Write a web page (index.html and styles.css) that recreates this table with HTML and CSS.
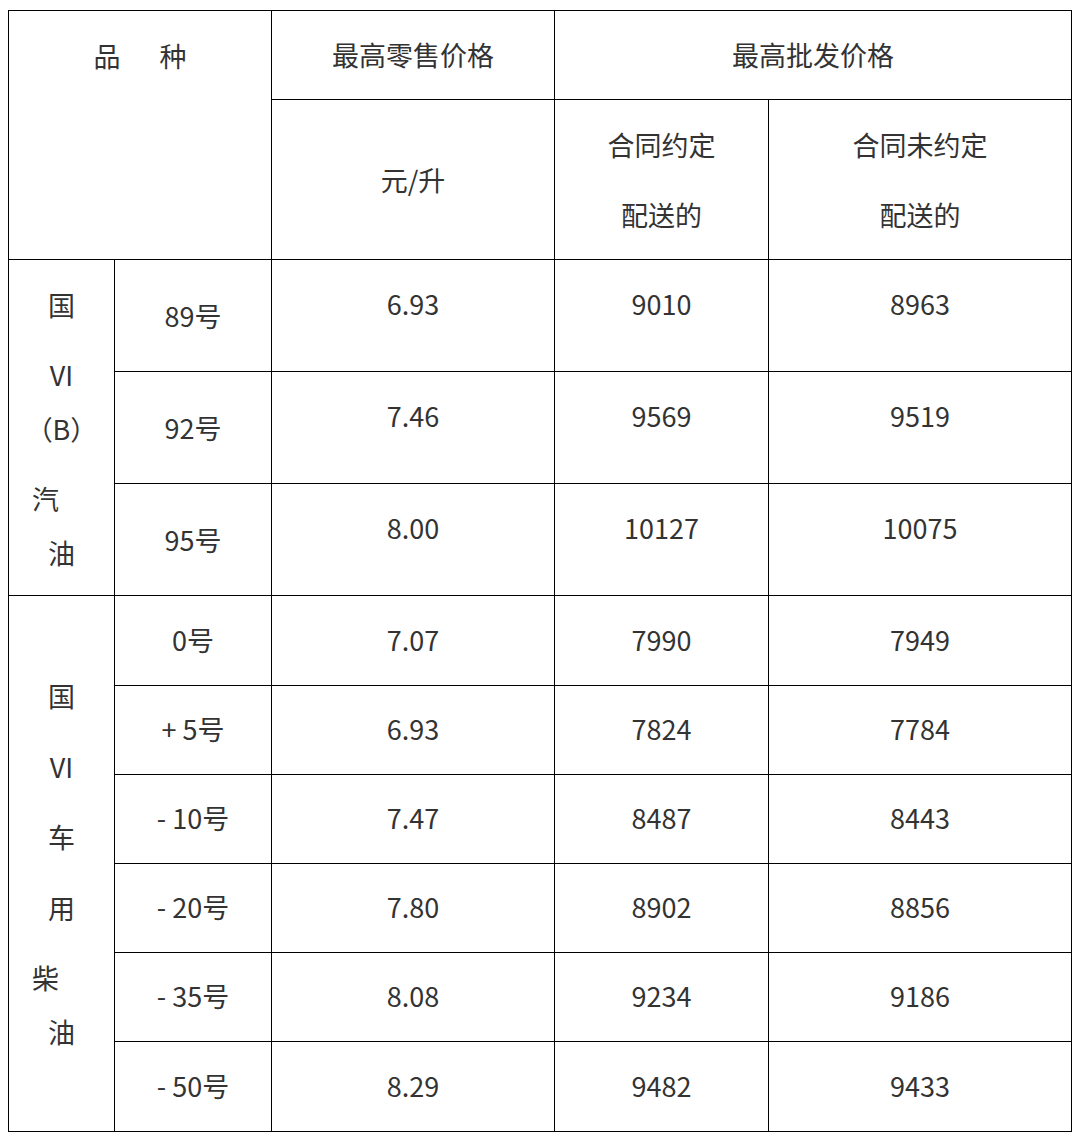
FILE: index.html
```html
<!DOCTYPE html>
<html lang="zh-CN">
<head>
<meta charset="utf-8">
<title>油价表</title>
<link rel="stylesheet" href="styles.css">
</head>
<body>
<table class="price">
  <colgroup>
    <col class="c1"><col class="c2"><col class="c3"><col class="c4"><col class="c5">
  </colgroup>
  <tr class="h1">
    <td colspan="2" rowspan="2" class="kind">品<span class="sp"></span>种</td>
    <td>最高零售价格</td>
    <td colspan="2">最高批发价格</td>
  </tr>
  <tr class="h2">
    <td>元/升</td>
    <td class="two">合同约定<br>配送的</td>
    <td class="two">合同未约定<br>配送的</td>
  </tr>
  <tr class="g">
    <td rowspan="3" class="side side-g">
      <div class="ln">国</div>
      <div class="ln gap70">VI</div>
      <div class="ln gap54">（B）</div>
      <div class="ln gap70 left">汽</div>
      <div class="ln gap54">油</div>
    </td>
    <td class="name">89号</td>
    <td class="num">6.93</td>
    <td class="num">9010</td>
    <td class="num">8963</td>
  </tr>
  <tr class="g">
    <td class="name">92号</td>
    <td class="num">7.46</td>
    <td class="num">9569</td>
    <td class="num">9519</td>
  </tr>
  <tr class="g">
    <td class="name">95号</td>
    <td class="num">8.00</td>
    <td class="num">10127</td>
    <td class="num">10075</td>
  </tr>
  <tr class="d first">
    <td rowspan="6" class="side side-d">
      <div class="ln">国</div>
      <div class="ln gap71">VI</div>
      <div class="ln gap70">车</div>
      <div class="ln gap71">用</div>
      <div class="ln gap70 left">柴</div>
      <div class="ln gap54">油</div>
    </td>
    <td>0号</td>
    <td>7.07</td>
    <td>7990</td>
    <td>7949</td>
  </tr>
  <tr class="d">
    <td>+ 5号</td>
    <td>6.93</td>
    <td>7824</td>
    <td>7784</td>
  </tr>
  <tr class="d">
    <td>- 10号</td>
    <td>7.47</td>
    <td>8487</td>
    <td>8443</td>
  </tr>
  <tr class="d">
    <td>- 20号</td>
    <td>7.80</td>
    <td>8902</td>
    <td>8856</td>
  </tr>
  <tr class="d">
    <td>- 35号</td>
    <td>8.08</td>
    <td>9234</td>
    <td>9186</td>
  </tr>
  <tr class="d last">
    <td>- 50号</td>
    <td>8.29</td>
    <td>9482</td>
    <td>9433</td>
  </tr>
</table>
</body>
</html>
```

FILE: styles.css
```css
html, body {
  background: #ffffff;
}
body {
  margin: 0;
  padding: 10px 8px;
  font-family: "Noto Sans CJK SC", "Noto Sans", sans-serif;
  font-size: 27px;
  color: #333333;
}
.price {
  border-collapse: collapse;
  table-layout: fixed;
  width: 1064px;
}
.c1 { width: 106px; }
.c2 { width: 157px; }
.c3 { width: 283px; }
.c4 { width: 214px; }
.c5 { width: 303px; }
.price td {
  border: 1px solid #000000;
  padding: 0;
  text-align: center;
  vertical-align: middle;
  line-height: 36px;
}
.h1 { height: 89px; }
.h2 { height: 160px; }
.price td.two { line-height: 70px; }
.price td.kind {
  vertical-align: top;
  padding-top: 27px;
}
.sp {
  display: inline-block;
  width: 39px;
}
.g { height: 112px; }
.d { height: 89px; }
.d.first, .d.last { height: 90px; }
.price .d td { padding-bottom: 2px; }
.price td.name { padding-top: 0; }
.price td.num { padding-bottom: 24px; }
.price td.side {
  vertical-align: top;
}
.price td.side-g { padding-top: 27px; }
.price .d td.side-d { padding-top: 82px; padding-bottom: 0; }
.ln {
  height: 36px;
  line-height: 36px;
}
.gap70 { margin-top: 34px; }
.gap71 { margin-top: 35px; }
.gap54 { margin-top: 18px; }
.left { padding-right: 32px; }
```
